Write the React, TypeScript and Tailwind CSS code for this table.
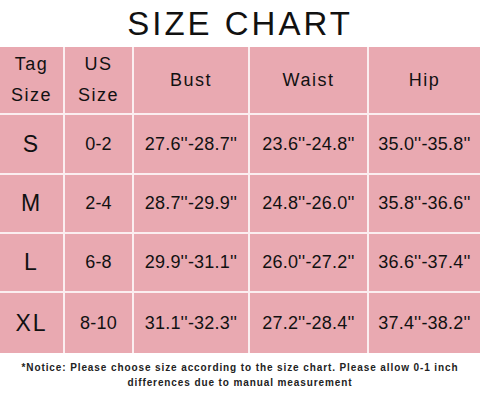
const headers = [['Tag', 'Size'], ['US', 'Size'], ['Bust'], ['Waist'], ['Hip']];

const rows = [
  ['S', '0-2', "27.6''-28.7''", "23.6''-24.8''", "35.0''-35.8''"],
  ['M', '2-4', "28.7''-29.9''", "24.8''-26.0''", "35.8''-36.6''"],
  ['L', '6-8', "29.9''-31.1''", "26.0''-27.2''", "36.6''-37.4''"],
  ['XL', '8-10', "31.1''-32.3''", "27.2''-28.4''", "37.4''-38.2''"],
];

export default function App() {
  return (
    <div className="w-[480px] h-[400px] bg-white text-[#111] font-[family-name:Liberation_Sans,Arial,sans-serif] overflow-hidden">
      {/* Title */}
      <h1 className="h-[47px] leading-[47px] text-center text-[33px] tracking-[3px] font-normal">
        SIZE CHART
      </h1>

      {/* Table */}
      <div className="grid grid-cols-[63px_67px_114px_117px_1fr] grid-rows-[66px_58px_57px_57px_60px] gap-[2px] bg-[#fbeef0]">
        {headers.map((h, i) => (
          <div
            key={i}
            className="bg-[#e9a9b1] flex flex-col items-center justify-center text-[18px] leading-[31px] tracking-[1.5px]">
            {h.map((line) => (
              <span key={line}>{line}</span>
            ))}
          </div>
        ))}
        {rows.map((row) =>
          row.map((cell, j) => (
            <div
              key={row[0] + j}
              className={`bg-[#e9a9b1] flex items-center justify-center ${
                j === 0 ? 'text-[23px] tracking-[2px]' : 'text-[18px] tracking-[0.2px]'
              }`}>
              {cell}
            </div>
          )),
        )}
      </div>

      {/* Notice */}
      <p className="pt-[7px] text-center text-[10px] leading-[15px] font-bold tracking-[0.9px] text-[#222]">
        *Notice: Please choose size according to the size chart. Please allow 0-1 inch
        <br />
        differences due to manual measurement
      </p>
    </div>
  );
}
